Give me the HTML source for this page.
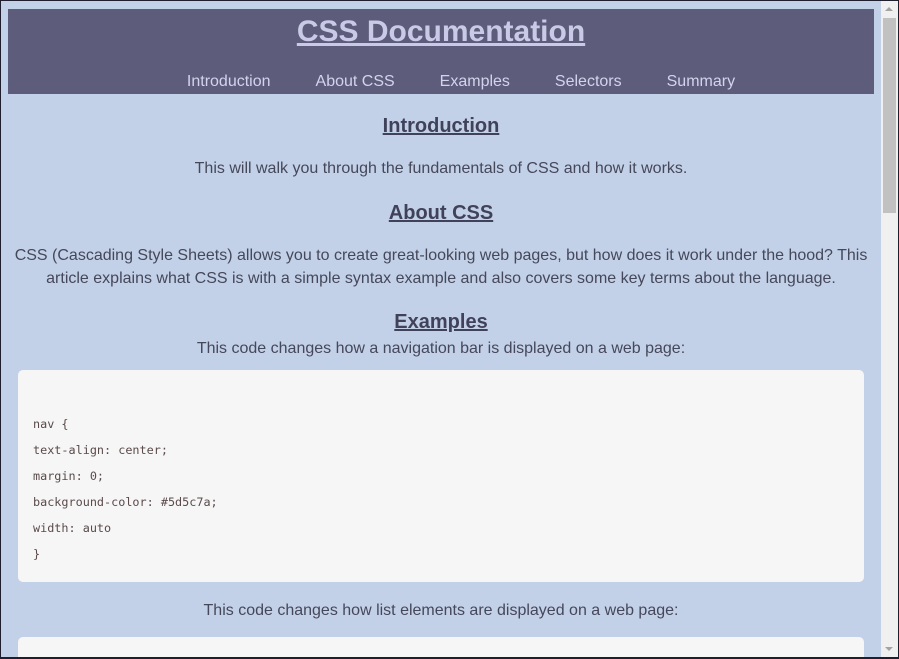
<!DOCTYPE html>
<html style="overflow:hidden;height:659px"><head><style>
html,body{margin:0;padding:0;}
body{width:899px;height:659px;overflow:hidden;background:#c3d1e8;font-family:"Liberation Sans",sans-serif;position:relative;}
.frame{position:absolute;left:0;top:0;width:897px;height:656px;border:1px solid #1e1e2e;border-bottom-width:2px;pointer-events:none;}
.page{position:absolute;left:1px;top:1px;width:880px;height:656px;overflow:hidden;}
header{margin:8px 7px 0 7px;background:#5d5c7a;height:85px;text-align:center;}
header h1{margin:0;padding-top:4px;font-size:30px;color:#c8cae6;text-decoration:underline;line-height:38px;}
nav{margin-top:22px;font-size:16px;color:#d2d4ee;padding-left:40px;}
nav span{margin:0 22.5px;}
h2{margin:0;text-align:center;font-size:20px;color:#40425a;text-decoration:underline;}
p{margin:0;text-align:center;font-size:16px;color:#45475a;line-height:25px;}
pre{margin:0 17px 0 17px;background:#f6f6f7;border-radius:5px;font-family:"DejaVu Sans Mono",monospace;font-size:11.8px;color:#5a4a4a;padding:41px 15px 15px;line-height:26px;}
.sb{position:absolute;left:881px;top:1px;width:17px;height:656px;background:#f0f0f0;}
.thumb{position:absolute;left:2px;top:17px;width:13px;height:195px;background:#c1c1c1;}
</style></head><body>
<div class="page">
<header><h1>CSS Documentation</h1>
<nav><span>Introduction</span><span>About CSS</span><span>Examples</span><span>Selectors</span><span>Summary</span></nav></header>
<h2 style="margin-top:21px;line-height:22px">Introduction</h2>
<p style="margin-top:19px">This will walk you through the fundamentals of CSS and how it works.</p>
<h2 style="margin-top:20px;line-height:24px">About CSS</h2>
<p style="margin-top:19px;padding:0 6px;line-height:23px">CSS (Cascading Style Sheets) allows you to create great-looking web pages, but how does it work under the hood? This article explains what CSS is with a simple syntax example and also covers some key terms about the language.</p>
<h2 style="margin-top:21px;line-height:22px">Examples</h2>
<p style="margin-top:3px">This code changes how a navigation bar is displayed on a web page:</p>
<pre style="margin-top:9px">nav {
text-align: center;
margin: 0;
background-color: #5d5c7a;
width: auto
}</pre>
<p style="margin-top:16px">This code changes how list elements are displayed on a web page:</p>
<div style="margin:14px 17px 0;background:#f6f6f7;border-radius:5px 5px 0 0;height:20px"></div>
</div>
<div class="sb"><div style="position:absolute;left:4px;top:6px;width:0;height:0;border-left:4px solid transparent;border-right:4px solid transparent;border-bottom:4px solid #a3a3a3"></div><div class="thumb"></div><div style="position:absolute;left:4px;bottom:6px;width:0;height:0;border-left:4px solid transparent;border-right:4px solid transparent;border-top:4px solid #a3a3a3"></div></div>
<div class="frame"></div>
</body></html>
